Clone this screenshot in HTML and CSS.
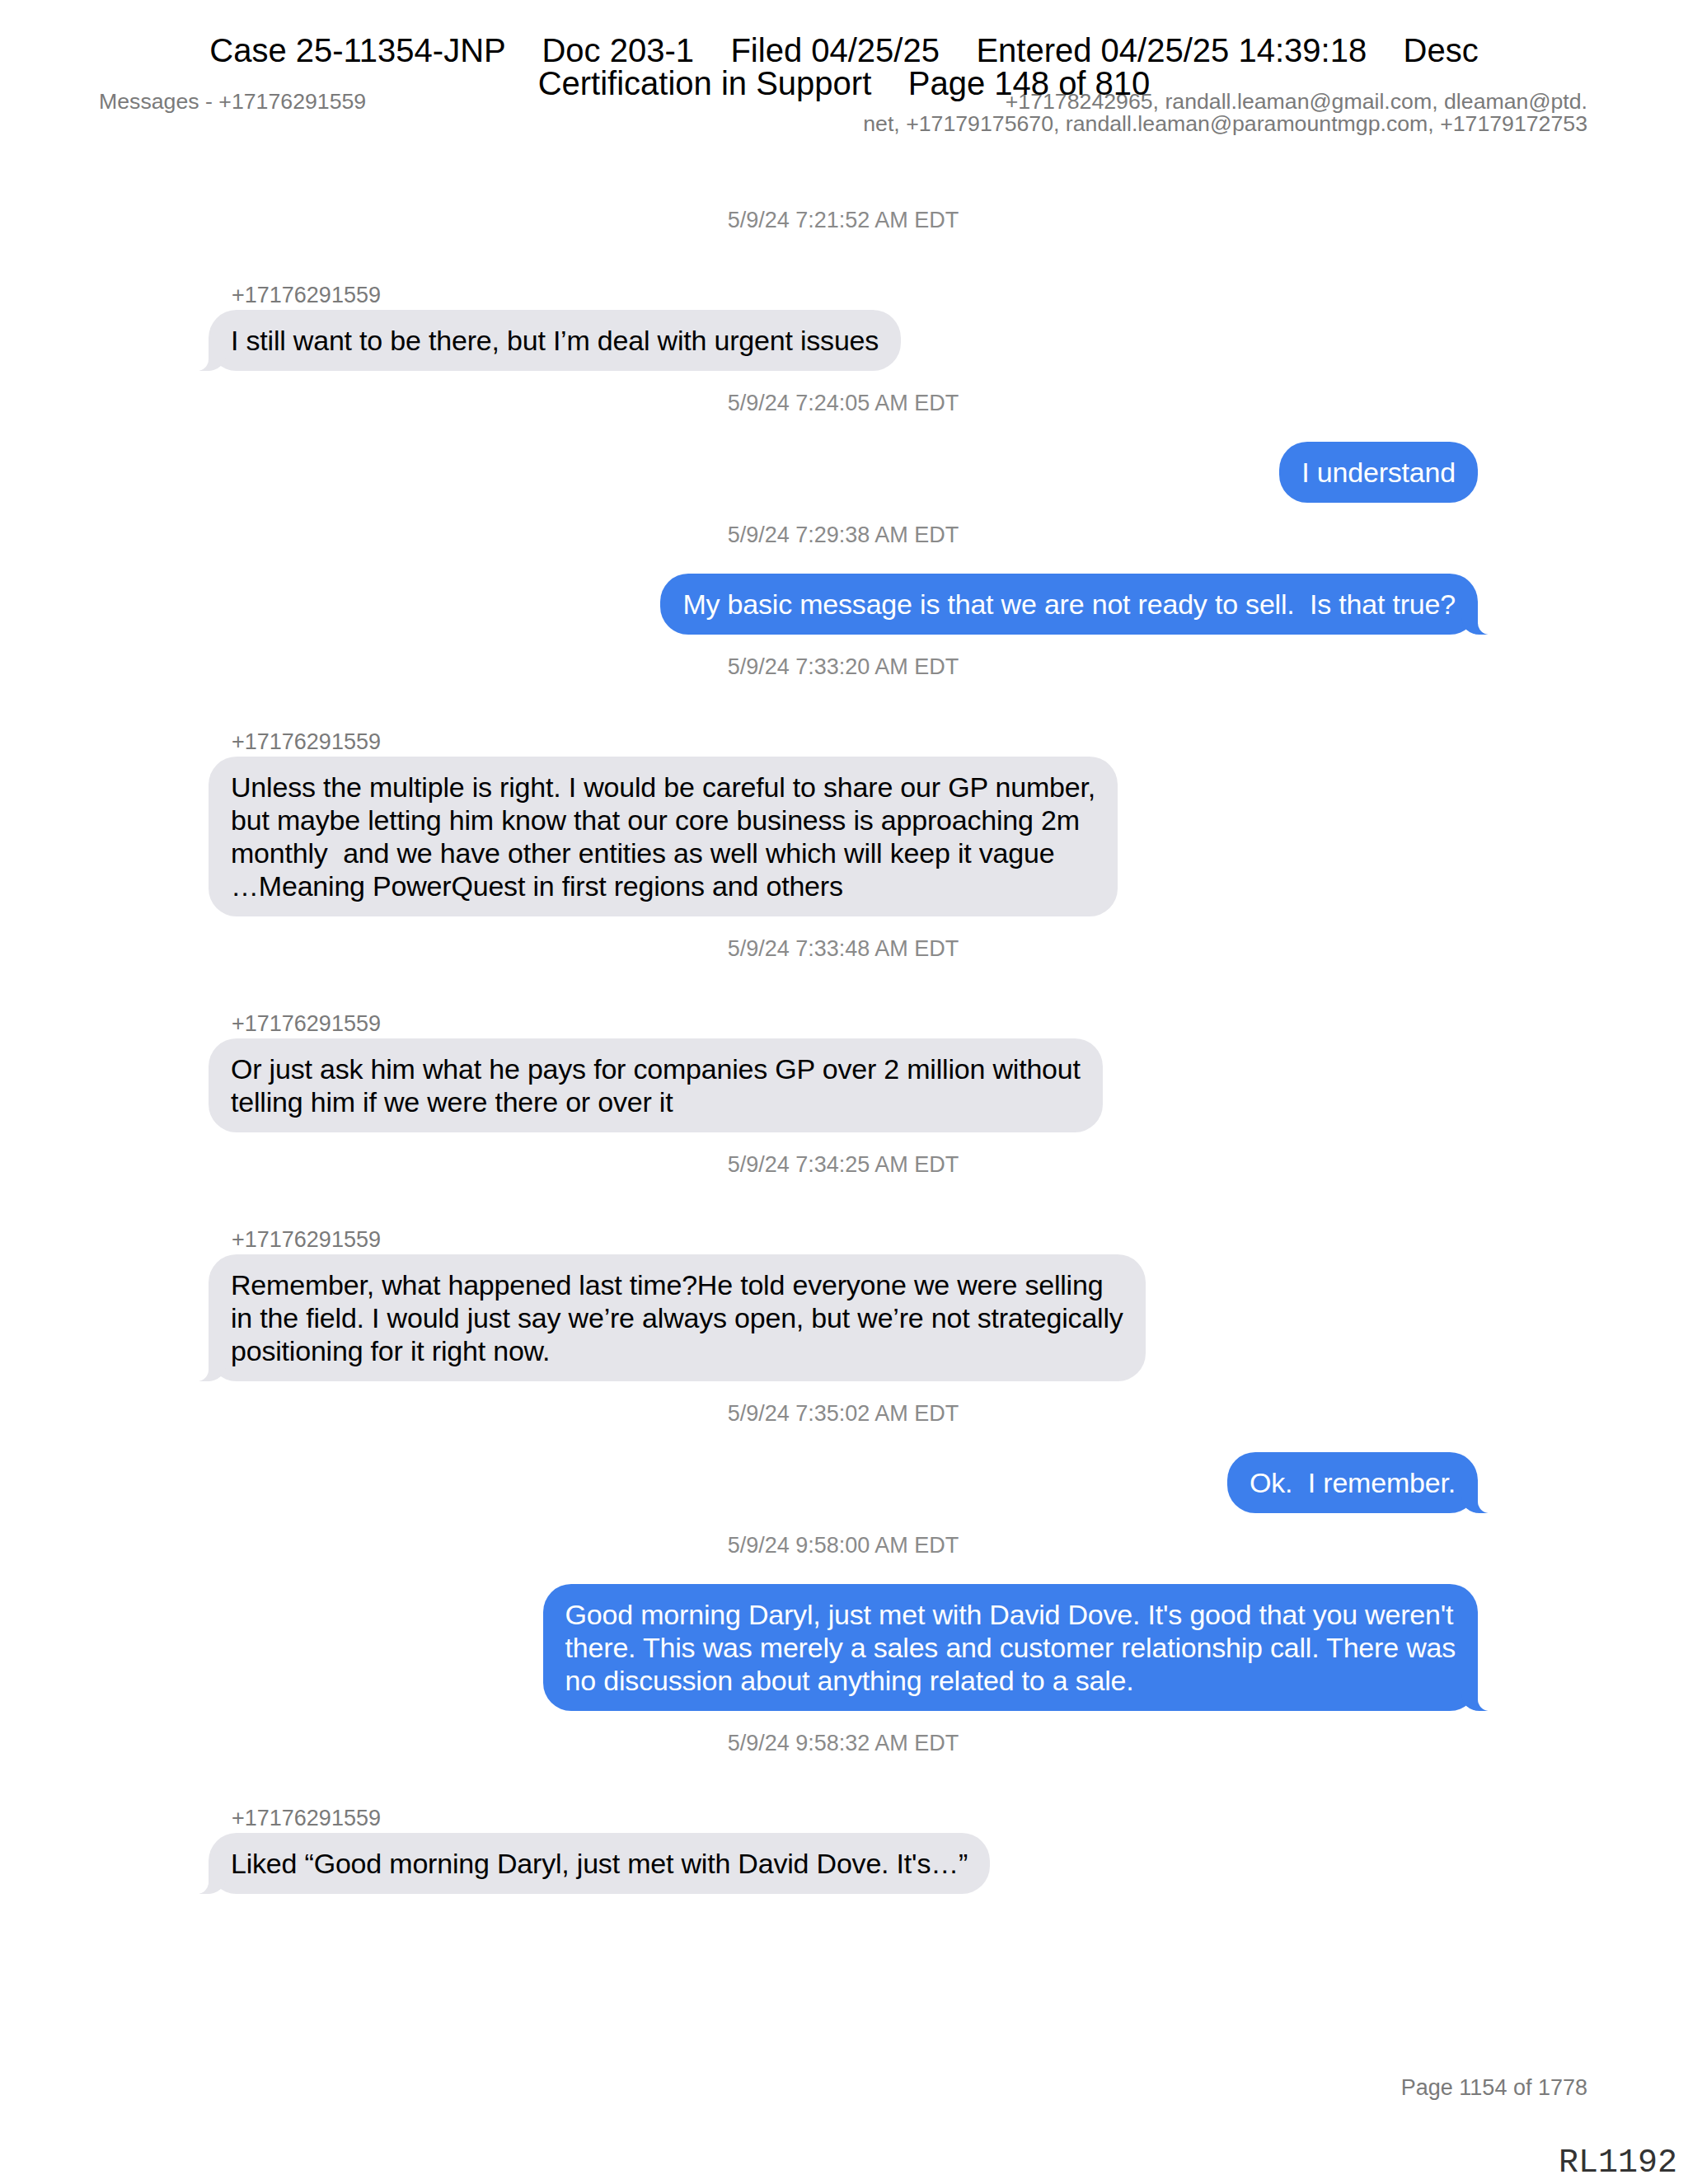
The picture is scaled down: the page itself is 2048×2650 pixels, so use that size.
FILE: index.html
```html
<!DOCTYPE html>
<html lang="en">
<head>
<meta charset="utf-8">
<title>Messages - +17176291559</title>
<link rel="stylesheet" href="styles.css">
</head>
<body>
<div class="page">
  <div class="case-stamp">
    <div class="case-line">Case 25-11354-JNP    Doc 203-1    Filed 04/25/25    Entered 04/25/25 14:39:18    Desc</div>
    <div class="case-line">Certification in Support    Page 148 of 810</div>
  </div>

  <header class="doc-head">
    <div class="doc-title">Messages - +17176291559</div>
    <div class="doc-parties">+17178242965, randall.leaman@gmail.com, dleaman@ptd.<br>net, +17179175670, randall.leaman@paramountmgp.com, +17179172753</div>
  </header>

  <main class="chat">
    <div class="ts first">5/9/24 7:21:52 AM EDT</div>
    <div class="sender">+17176291559</div>
    <div class="row recv"><div class="bubble gray tail">I still want to be there, but I’m deal with urgent issues</div></div>

    <div class="ts">5/9/24 7:24:05 AM EDT</div>
    <div class="row sent"><div class="bubble blue">I understand</div></div>

    <div class="ts">5/9/24 7:29:38 AM EDT</div>
    <div class="row sent"><div class="bubble blue tail">My basic message is that we are not ready to sell.  Is that true?</div></div>

    <div class="ts">5/9/24 7:33:20 AM EDT</div>
    <div class="sender">+17176291559</div>
    <div class="row recv"><div class="bubble gray">Unless the multiple is right. I would be careful to share our GP number,<br>but maybe letting him know that our core business is approaching 2m<br>monthly  and we have other entities as well which will keep it vague<br>…Meaning PowerQuest in first regions and others</div></div>

    <div class="ts">5/9/24 7:33:48 AM EDT</div>
    <div class="sender">+17176291559</div>
    <div class="row recv"><div class="bubble gray">Or just ask him what he pays for companies GP over 2 million without<br>telling him if we were there or over it</div></div>

    <div class="ts">5/9/24 7:34:25 AM EDT</div>
    <div class="sender">+17176291559</div>
    <div class="row recv"><div class="bubble gray tail">Remember, what happened last time?He told everyone we were selling<br>in the field. I would just say we’re always open, but we’re not strategically<br>positioning for it right now.</div></div>

    <div class="ts">5/9/24 7:35:02 AM EDT</div>
    <div class="row sent"><div class="bubble blue tail">Ok.  I remember.</div></div>

    <div class="ts">5/9/24 9:58:00 AM EDT</div>
    <div class="row sent"><div class="bubble blue tail">Good morning Daryl, just met with David Dove. It's good that you weren't<br>there. This was merely a sales and customer relationship call. There was<br>no discussion about anything related to a sale.</div></div>

    <div class="ts">5/9/24 9:58:32 AM EDT</div>
    <div class="sender">+17176291559</div>
    <div class="row recv"><div class="bubble gray tail">Liked “Good morning Daryl, just met with David Dove. It's…”</div></div>
  </main>

  <footer class="doc-foot">Page 1154 of 1778</footer>
  <div class="bates">RL1192</div>
</div>
</body>
</html>
```

FILE: styles.css
```css
html, body {
  margin: 0;
  padding: 0;
  background: #ffffff;
}

body {
  font-family: "Liberation Sans", Arial, sans-serif;
  color: #000;
}

.page {
  position: relative;
  width: 2048px;
  min-height: 2650px;
  box-sizing: border-box;
  padding: 0 122px 0 120px;
  display: flex;
  flex-direction: column;
}

/* court filing stamp, overprinted on the page */
.case-stamp {
  position: absolute;
  top: 41px;
  left: 0;
  right: 0;
  text-align: center;
  font-size: 40px;
  line-height: 40px;
  color: #000;
  z-index: 2;
}

.case-line {
  white-space: pre;
}

.doc-head {
  margin-top: 110px;
  display: flex;
  justify-content: space-between;
  align-items: flex-start;
  font-size: 26.7px;
  line-height: 27px;
  color: #7a7a7a;
}

.doc-parties {
  text-align: right;
}

.chat {
  display: flex;
  flex-direction: column;
  padding: 0 133px;
}

.ts {
  text-align: center;
  font-size: 27px;
  line-height: 30px;
  color: #8a8a8a;
  margin: 24px 0 32px;
}

.ts.first {
  margin-top: 88px;
}

.sender {
  margin-top: 29px;
  padding-left: 28px;
  font-size: 27px;
  line-height: 30px;
  color: #7a7a7a;
}

.row {
  display: flex;
}

.row.recv {
  justify-content: flex-start;
  margin-top: 3px;
}

.row.sent {
  justify-content: flex-end;
}

.bubble {
  position: relative;
  font-size: 34px;
  letter-spacing: -0.2px;
  line-height: 40px;
  padding: 17px 27px;
  border-radius: 34px;
  white-space: pre;
}

.bubble.gray {
  background: #e5e5ea;
  color: #000;
}

.bubble.blue {
  background: #3d7fec;
  color: #fff;
}

/* iMessage tails */
.bubble.tail::before,
.bubble.tail::after {
  content: "";
  position: absolute;
  bottom: 0;
  height: 40px;
}

.bubble.gray.tail::before {
  left: -11px;
  width: 32px;
  background: #e5e5ea;
  border-bottom-right-radius: 22px 20px;
}

.bubble.gray.tail::after {
  left: -36px;
  width: 36px;
  background: #fff;
  border-bottom-right-radius: 14px;
}

.bubble.blue.tail::before {
  right: -12px;
  width: 32px;
  background: #3d7fec;
  border-bottom-left-radius: 22px 20px;
}

.bubble.blue.tail::after {
  right: -36px;
  width: 36px;
  background: #fff;
  border-bottom-left-radius: 14px;
}

.doc-foot {
  margin-top: auto;
  margin-bottom: 102px;
  text-align: right;
  font-size: 27px;
  line-height: 30px;
  color: #7a7a7a;
}

.bates {
  position: absolute;
  right: 13px;
  bottom: 5px;
  font-family: "Liberation Mono", "Courier New", monospace;
  font-size: 40px;
  line-height: 40px;
  color: #333;
}
```
